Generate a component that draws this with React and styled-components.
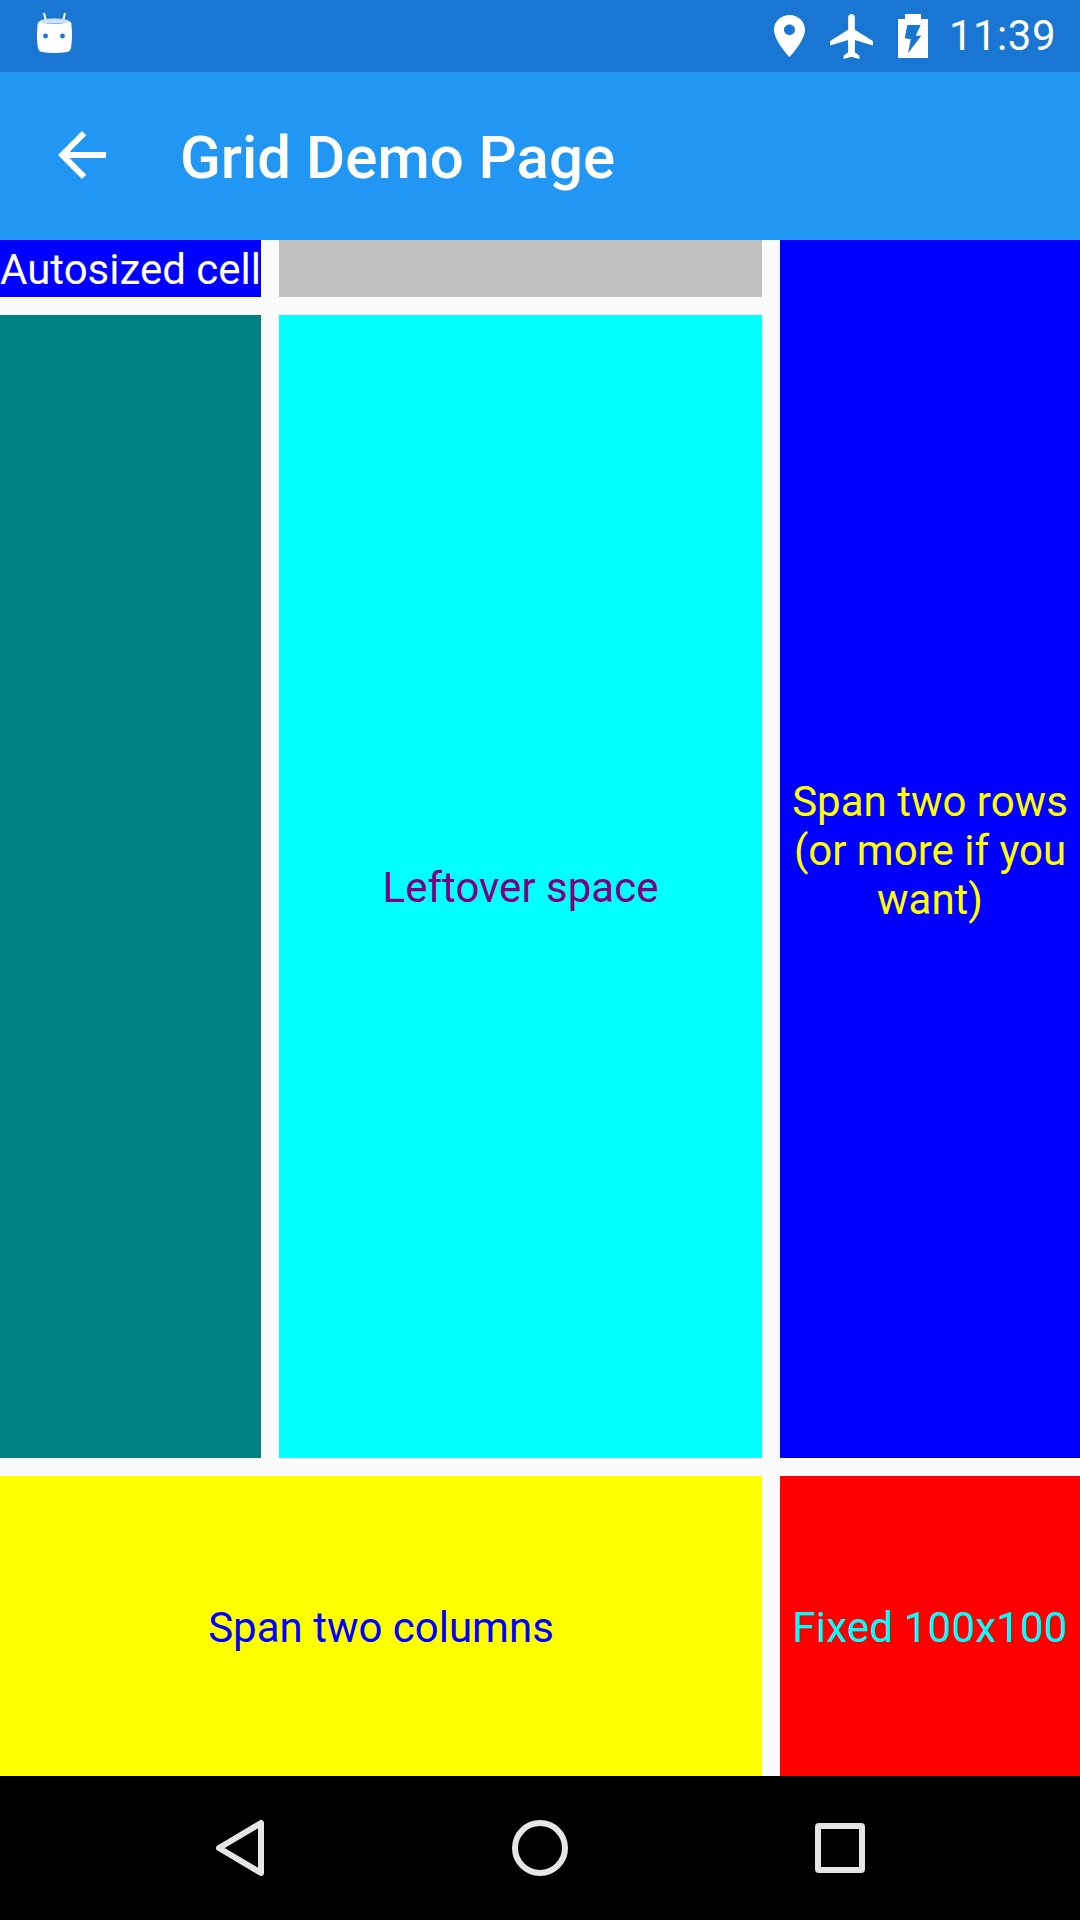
import React from 'react';
import styled, { createGlobalStyle } from 'styled-components';

const GlobalStyle = createGlobalStyle`
  html, body {
    margin: 0;
    padding: 0;
    background: #fafafa;
  }
  * {
    box-sizing: border-box;
  }
`;

const Screen = styled.div`
  width: 1080px;
  height: 1920px;
  display: flex;
  flex-direction: column;
  overflow: hidden;
  background: #fafafa;
  font-family: Roboto, "Liberation Sans", sans-serif;
`;

const StatusBar = styled.div`
  height: 72px;
  flex: none;
  display: flex;
  align-items: center;
  justify-content: space-between;
  padding: 0 24px 0 37px;
  background: #1976d2;
  color: #fff;
`;

const HeadSvg = styled.svg`
  margin-top: -6px;
`;

const StatusIcons = styled.div`
  display: flex;
  align-items: center;
  gap: 25px;
`;

const Clock = styled.span`
  font-size: 42px;
  line-height: 72px;
  letter-spacing: 0.5px;
  margin-left: -4px;
`;

const AppBar = styled.div`
  height: 168px;
  flex: none;
  display: flex;
  align-items: center;
  padding-left: 46px;
  gap: 62px;
  background: #2196f3;
  color: #fff;
`;

const BackIconWrap = styled.div`
  display: flex;
  margin-top: -2px;
`;

const Title = styled.h1`
  margin: 0;
  padding-top: 2px;
  font-size: 60px;
  font-weight: 500;
`;

const Grid = styled.div`
  flex: 1;
  display: grid;
  grid-template-columns: 261px 1fr 300px;
  grid-template-rows: 57px 1fr 300px;
  gap: 18px;
`;

const Cell = styled.div`
  display: flex;
  align-items: center;
  justify-content: center;
  padding-top: 2px;
  text-align: center;
  font-size: 42px;
  line-height: 49px;
  white-space: pre;
  letter-spacing: ${props => props.$spacing || 'normal'};
  background: ${props => props.$bg};
  color: ${props => props.$fg || '#fff'};
  grid-column: ${props => props.$column || 'auto'};
  grid-row: ${props => props.$row || 'auto'};
`;

const NavBar = styled.div`
  height: 144px;
  flex: none;
  display: flex;
  align-items: center;
  justify-content: center;
  background: #000;
`;

const NavButton = styled.div`
  width: 300px;
  display: flex;
  justify-content: center;
`;

const AndroidHead = () => (
  <HeadSvg width="35" height="42" viewBox="0 0 35 42">
    <path d="M7 1l2 8M28 1l-2 8" stroke="#fff" strokeWidth="2" />
    <path d="M1 11c1-2 3-3 5-3.500 7-1.200 16-1.200 23 0 2 .5 4 1.500 5 3.500z" fill="#cfe0f5" />
    <path d="M1 10c9 2 24 2 33 0 1.300 7 1.300 19 0 26-.4 2.200-2 3.500-4 4-8 1.300-17 1.300-25 0-2-.5-3.600-1.800-4-4-1.300-7-1.300-19 0-26z" fill="#fff" />
    <circle cx="8.500" cy="24" r="2.400" fill="#1976d2" />
    <circle cx="25.500" cy="24" r="2.400" fill="#1976d2" />
  </HeadSvg>
);

const PlaceIcon = () => (
  <svg width="31" height="42" viewBox="5 2 14 20" preserveAspectRatio="none" fill="#fff">
    <path d="M12 2C8.130 2 5 5.130 5 9c0 5.250 7 13 7 13s7-7.750 7-13c0-3.870-3.130-7-7-7zm0 9.500c-1.380 0-2.500-1.120-2.500-2.500s1.120-2.500 2.500-2.500 2.500 1.120 2.500 2.500-1.120 2.500-2.500 2.500z" />
  </svg>
);

const PlaneIcon = () => (
  <svg width="43" height="45" viewBox="2 2 19 20" fill="#fff">
    <path d="M21 16v-2l-8-5V3.500c0-.83-.67-1.500-1.500-1.500S10 2.670 10 3.500V9l-8 5v2l8-2.500V19l-2 1.500V22l3.500-1 3.500 1v-1.500L13 19v-5.500l8 2.500z" />
  </svg>
);

const BatteryIcon = () => (
  <svg width="30" height="44" viewBox="0 0 30 44">
    <path
      fillRule="evenodd"
      fill="#fff"
      d="M7 0h16v5h7v39H0V5h7zM9.300 11L6.700 24.300l6 1L10 39.300 23.300 21.700h-5.600L22.700 11z"
    />
  </svg>
);

const BackArrow = () => (
  <svg width="72" height="72" viewBox="0 0 24 24" fill="#fff">
    <path d="M20 11H7.830l5.590-5.590L12 4l-8 8 8 8 1.410-1.410L7.830 13H20v-2z" />
  </svg>
);

const NavBack = () => (
  <svg width="60" height="60" viewBox="0 0 60 60" fill="none" stroke="#e6e6e6" strokeWidth="6" strokeLinejoin="round">
    <path d="M51 5v50L9 30z" />
  </svg>
);

const NavHome = () => (
  <svg width="60" height="60" viewBox="0 0 60 60" fill="none" stroke="#e6e6e6" strokeWidth="6">
    <circle cx="30" cy="30" r="25" />
  </svg>
);

const NavRecents = () => (
  <svg width="60" height="60" viewBox="0 0 60 60" fill="none" stroke="#e6e6e6" strokeWidth="6" strokeLinejoin="round">
    <rect x="8" y="8" width="44" height="44" rx="1" />
  </svg>
);

const App = () => (
  <Screen>
    <GlobalStyle />
    <StatusBar>
      <AndroidHead />
      <StatusIcons>
        <PlaceIcon />
        <PlaneIcon />
        <BatteryIcon />
        <Clock>11:39</Clock>
      </StatusIcons>
    </StatusBar>
    <AppBar>
      <BackIconWrap>
        <BackArrow />
      </BackIconWrap>
      <Title>Grid Demo Page</Title>
    </AppBar>
    <Grid>
      <Cell $bg="#0000ff">Autosized cell</Cell>
      <Cell $bg="#c0c0c0" />
      <Cell $bg="#0000ff" $fg="#ffff00" $column="3" $row="1 / span 2">
        {'Span two rows\n(or more if you\nwant)'}
      </Cell>
      <Cell $bg="#008080" />
      <Cell $bg="#00ffff" $fg="#800080">Leftover space</Cell>
      <Cell $bg="#ffff00" $fg="#0000ff" $column="1 / span 2">Span two columns</Cell>
      <Cell $bg="#ff0000" $fg="#00ffff" $spacing="0.2px">Fixed 100x100</Cell>
    </Grid>
    <NavBar>
      <NavButton><NavBack /></NavButton>
      <NavButton><NavHome /></NavButton>
      <NavButton><NavRecents /></NavButton>
    </NavBar>
  </Screen>
);

export default App;
